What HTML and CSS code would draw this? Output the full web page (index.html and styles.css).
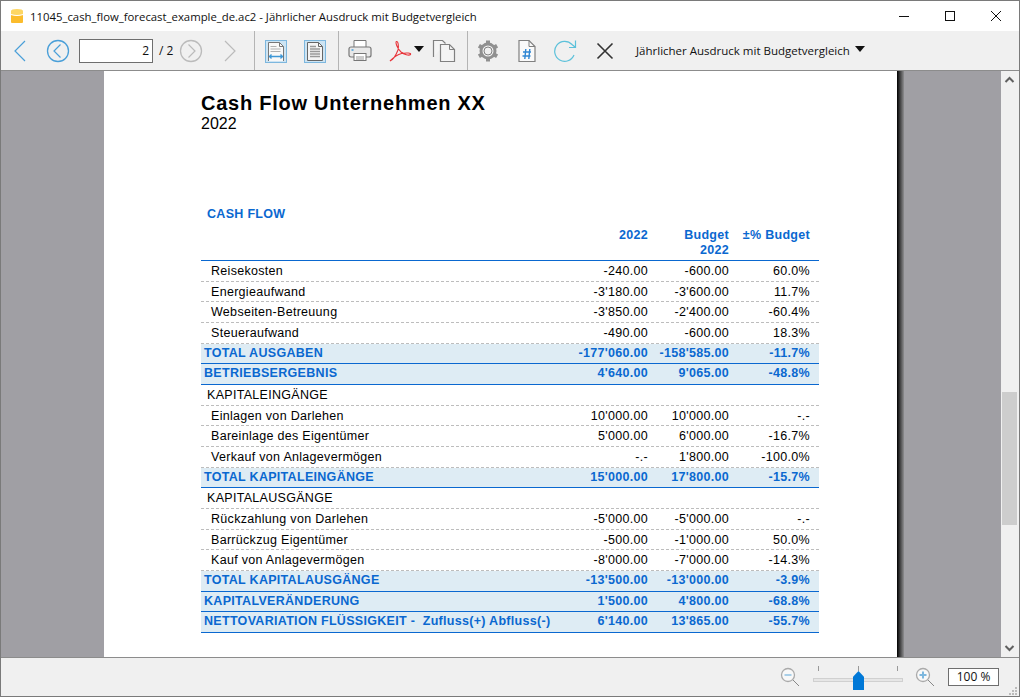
FILE: index.html
```html
<!DOCTYPE html>
<html>

<head>
    <title>11045_cash_flow_forecast_example_de.ac2</title>
    <link rel="stylesheet" href="styles.css">
</head>

<body>
    <div class="window">
        <div class="titlebar">
            <svg class="appicon" width="14" height="16" viewBox="0 0 14 16">
                <path d="M1 4h12v10q0 1-1 1H2q-1 0-1-1z" fill="#fbbc2c" />
                <path d="M1 3q0-2 6-2t6 2v3q-3 1.500-6 1.500T1 6z" fill="#fdd663" />
                <path d="M1 6.500q6 2 12 0" fill="none" stroke="#fff" stroke-width="1.200" />
            </svg>
            <span class="titletext">11045_cash_flow_forecast_example_de.ac2 - Jährlicher Ausdruck mit Budgetvergleich</span>
            <div class="winbtns">
                <svg width="46" height="16" viewBox="0 0 46 16"><path d="M18 8.500h10" stroke="#111" /></svg>
                <svg width="46" height="16" viewBox="0 0 46 16"><rect x="18.500" y="3.500" width="9" height="9" fill="none" stroke="#111" /></svg>
                <svg width="46" height="16" viewBox="0 0 46 16"><path d="M18 3l10 10M28 3L18 13" stroke="#111" fill="none" /></svg>
            </div>
        </div>

        <div class="toolbar">
            <svg class="t-back" width="16" height="24" viewBox="0 0 16 24"><path d="M13 2L3 12l10 10" fill="none" stroke="#4a9fd8" stroke-width="1.200" /></svg>
            <svg class="t-prev" width="24" height="24" viewBox="0 0 24 24"><circle cx="12" cy="12" r="10.500" fill="none" stroke="#4a9fd8" stroke-width="1.300" /><path d="M14.500 5.500L8 12l6.500 6.500" fill="none" stroke="#4a9fd8" stroke-width="1.200" /></svg>
            <div class="pagebox">2</div>
            <span class="pagetotal">/ 2</span>
            <svg class="t-next" width="24" height="24" viewBox="0 0 24 24"><circle cx="12" cy="12" r="10.500" fill="none" stroke="#bbb" stroke-width="1.300" /><path d="M9.500 5.500L16 12l-6.500 6.500" fill="none" stroke="#bbb" stroke-width="1.200" /></svg>
            <svg class="t-fwd" width="16" height="24" viewBox="0 0 16 24"><path d="M3 2l10 10L3 22" fill="none" stroke="#bbb" stroke-width="1.200" /></svg>
            <div class="sep s1"></div>
            <svg class="t-fit" width="24" height="24" viewBox="0 0 24 24">
                <rect x="1.500" y="1.500" width="21" height="22" fill="#cde4f3" stroke="#7db7de" />
                <path d="M4.500 22V3.500h11l4 4V22" fill="#f8f8f8" stroke="#777" />
                <path d="M15.500 3.500v4h4" fill="none" stroke="#777" />
                <path d="M6.500 7.500h6M6.500 10h10M6.500 12.500h10" stroke="#b0b0b0" />
                <path d="M5 17.500h14M7.500 15.500L5.500 17.500l2 2M16.500 15.500l2 2-2 2" fill="none" stroke="#3d97d6" stroke-width="1.300" />
            </svg>
            <svg class="t-page" width="24" height="24" viewBox="0 0 24 24">
                <rect x="1.500" y="1.500" width="21" height="22" fill="#cde4f3" stroke="#7db7de" />
                <path d="M4.500 21.500V3.500h11l4 4v14z" fill="#f4f4f4" stroke="#666" />
                <path d="M15.500 3.500v4h4" fill="none" stroke="#666" />
                <path d="M7 7.500h6M7 10h10M7 12.500h10M7 15h10M7 17.500h10" stroke="#999" stroke-width="1.500" />
            </svg>
            <div class="sep s2"></div>
            <svg class="t-print" width="24" height="24" viewBox="0 0 24 24">
                <path d="M6 8V1.500h12V8" fill="#fff" stroke="#777" />
                <rect x="1" y="8" width="22" height="10" rx="2" fill="#e8e8e8" stroke="#777" stroke-width="1.200" />
                <rect x="6" y="14.500" width="12" height="7" fill="#fff" stroke="#777" />
                <path d="M8 18h8M8 20h8" stroke="#999" />
                <path d="M3.500 11h2" stroke="#3d97d6" stroke-width="1.400" />
            </svg>
            <svg class="t-pdf" width="24" height="24" viewBox="0 0 24 24">
                <path d="M2 22c3-1 6-6 8-11 1-4 0-9-1.500-8.500C7 3 9 9 13 13c3 2.500 8 4 9.500 2.500 1-1.500-4-2-9-1-4 1-9 5-11.500 7.500z" fill="none" stroke="#e8343a" stroke-width="1.100" />
            </svg>
            <div class="caret t-caret"></div>
            <svg class="t-copy" width="24" height="24" viewBox="0 0 24 24">
                <path d="M1.500 18V1.500h9l3 3" fill="#f4f4f4" stroke="#808080" stroke-width="1.200" />
                <path d="M8.500 22.500v-17h9l5 5v12z" fill="#f4f4f4" stroke="#808080" stroke-width="1.200" />
                <path d="M17.500 5.500v5h5" fill="none" stroke="#808080" />
            </svg>
            <div class="sep s3"></div>
            <svg class="t-gear" width="24" height="24" viewBox="0 0 24 24">
                <circle cx="12" cy="12" r="7" fill="none" stroke="#909090" stroke-width="3" />
                <path d="M12 1.500v4M12 18.500v4M2.900 6.700l3.500 2M17.600 15.300l3.500 2M2.900 17.300l3.500-2M17.600 8.700l3.500-2" stroke="#909090" stroke-width="4" />
                <circle cx="12" cy="12" r="4" fill="#f0f0f0" stroke="#666" stroke-width="0.800" />
            </svg>
            <svg class="t-hash" width="24" height="24" viewBox="0 0 24 24">
                <path d="M4 22.500v-21h10l6 6v15z" fill="#fafafa" stroke="#808080" stroke-width="1.200" />
                <path d="M14 1.500v6h6" fill="none" stroke="#808080" />
                <path d="M8 13h8M7.500 17h8M10.800 10l-1 10M14.800 10l-1 10" stroke="#2f86d3" stroke-width="1.400" fill="none" />
            </svg>
            <svg class="t-refresh" width="24" height="24" viewBox="0 0 24 24">
                <path d="M20 16a10 10 0 1 1-2-10.500L21 8" fill="none" stroke="#5cc1da" stroke-width="1.200" />
                <path d="M21.500 1.500V8.500H15" fill="none" stroke="#5cc1da" stroke-width="1.200" />
            </svg>
            <svg class="t-close" width="24" height="24" viewBox="0 0 24 24"><path d="M4.500 4.500l15 15M19.500 4.500l-15 15" stroke="#333" stroke-width="1.600" /></svg>
            <span class="reportname">Jährlicher Ausdruck mit Budgetvergleich</span>
            <div class="caret t-caret2"></div>
        </div>

        <div class="viewer">
            <div class="paper">
                <h1 class="doctitle">Cash Flow Unternehmen XX</h1>
                <div class="docyear">2022</div>

                <div class="report">
                    <div class="reporttitle">CASH FLOW</div>
                    <div class="row head">
                        <div></div>
                        <div>2022</div>
                        <div>Budget<br>2022</div>
                        <div>±% Budget</div>
                    </div>

                    <div class="row item"><div>Reisekosten</div><div>-240.00</div><div>-600.00</div><div>60.0%</div></div>
                    <div class="row item"><div>Energieaufwand</div><div>-3'180.00</div><div>-3'600.00</div><div>11.7%</div></div>
                    <div class="row item"><div>Webseiten-Betreuung</div><div>-3'850.00</div><div>-2'400.00</div><div>-60.4%</div></div>
                    <div class="row item"><div>Steueraufwand</div><div>-490.00</div><div>-600.00</div><div>18.3%</div></div>
                    <div class="row total"><div>TOTAL AUSGABEN</div><div>-177'060.00</div><div>-158'585.00</div><div>-11.7%</div></div>
                    <div class="row total"><div>BETRIEBSERGEBNIS</div><div>4'640.00</div><div>9'065.00</div><div>-48.8%</div></div>
                    <div class="row group"><div>KAPITALEINGÄNGE</div><div></div><div></div><div></div></div>
                    <div class="row item"><div>Einlagen von Darlehen</div><div>10'000.00</div><div>10'000.00</div><div>-.-</div></div>
                    <div class="row item"><div>Bareinlage des Eigentümer</div><div>5'000.00</div><div>6'000.00</div><div>-16.7%</div></div>
                    <div class="row item"><div>Verkauf von Anlagevermögen</div><div>-.-</div><div>1'800.00</div><div>-100.0%</div></div>
                    <div class="row total"><div>TOTAL KAPITALEINGÄNGE</div><div>15'000.00</div><div>17'800.00</div><div>-15.7%</div></div>
                    <div class="row group"><div>KAPITALAUSGÄNGE</div><div></div><div></div><div></div></div>
                    <div class="row item"><div>Rückzahlung von Darlehen</div><div>-5'000.00</div><div>-5'000.00</div><div>-.-</div></div>
                    <div class="row item"><div>Barrückzug Eigentümer</div><div>-500.00</div><div>-1'000.00</div><div>50.0%</div></div>
                    <div class="row item"><div>Kauf von Anlagevermögen</div><div>-8'000.00</div><div>-7'000.00</div><div>-14.3%</div></div>
                    <div class="row total"><div>TOTAL KAPITALAUSGÄNGE</div><div>-13'500.00</div><div>-13'000.00</div><div>-3.9%</div></div>
                    <div class="row total"><div>KAPITALVERÄNDERUNG</div><div>1'500.00</div><div>4'800.00</div><div>-68.8%</div></div>
                    <div class="row total"><div>NETTOVARIATION FLÜSSIGKEIT - &nbsp;Zufluss(+) Abfluss(-)</div><div>6'140.00</div><div>13'865.00</div><div>-55.7%</div></div>
                </div>
            </div>
            <div class="papershadow"></div>
            <div class="backdrop"></div>
            <div class="scrollbar">
                <svg class="arrow" width="17" height="18" viewBox="0 0 17 18"><path d="M4.500 11l4-4 4 4" fill="none" stroke="#606060" stroke-width="2" /></svg>
                <div class="thumb"></div>
                <svg class="arrow arrow-down" width="17" height="18" viewBox="0 0 17 18"><path d="M4.500 7l4 4 4-4" fill="none" stroke="#606060" stroke-width="2" /></svg>
            </div>
        </div>

        <div class="statusbar">
            <svg class="zoomicon" width="22" height="22" viewBox="0 0 22 22">
                <circle cx="9" cy="9" r="6.500" fill="#f8f8f8" stroke="#aaa" stroke-width="1.300" />
                <path d="M5.500 9h7" stroke="#a9cfe8" stroke-width="2" />
                <path d="M14 14l6 6" stroke="#888" />
            </svg>
            <div class="slider">
                <i class="tick tick1"></i><i class="tick tick2"></i><i class="tick tick3"></i>
                <div class="track"></div>
                <div class="knob"></div>
            </div>
            <svg class="zoomicon zoomplus" width="22" height="22" viewBox="0 0 22 22">
                <circle cx="9" cy="9" r="6.500" fill="#f8f8f8" stroke="#aaa" stroke-width="1.300" />
                <path d="M5.500 9h7M9 5.500v7" stroke="#7db7de" stroke-width="2" />
                <path d="M14 14l6 6" stroke="#888" />
            </svg>
            <div class="zoombox">100 %</div>
            <svg class="grip" width="10" height="10" viewBox="0 0 10 10"><path d="M7 1h2v2H7zM4 4h2v2H4zM7 4h2v2H7zM1 7h2v2H1zM4 7h2v2H4zM7 7h2v2H7z" fill="#bbb" /></svg>
        </div>
    </div>
</body>

</html>
```

FILE: styles.css
```css
html, body {
    margin: 0;
    padding: 0;
}

body {
    width: 1020px;
    height: 698px;
    overflow: hidden;
    background-color: #fff;
}

.window {
    box-sizing: border-box;
    width: 1020px;
    height: 697px;
    border: 1px solid #7a7a7a;
    display: flex;
    flex-direction: column;
    font-family: "Open Sans", sans-serif;
}

.titlebar {
    height: 30px;
    background-color: #fff;
    display: flex;
    align-items: center;
    flex: none;
}

.appicon {
    margin-left: 9px;
}

.titletext {
    margin-left: 6px;
    font-family: "Open Sans", sans-serif;
    font-size: 11.35px;
    color: #111;
    white-space: nowrap;
}

.winbtns {
    margin-left: auto;
    display: flex;
    margin-right: 0;
}

.toolbar {
    height: 40px;
    flex: none;
    box-sizing: border-box;
    background-color: #f0f0f0;
    border-bottom: 1px solid #8c8c8c;
    display: flex;
    align-items: center;
    font-size: 11.5px;
    color: #111;
}

.toolbar svg {
    flex: none;
}

.t-back { margin-left: 11px; }
.t-prev { margin-left: 18px; }
.t-next { margin-left: 4px; }
.t-fwd { margin-left: 19px; }
.t-fit { margin-left: 9px; }
.t-page { margin-left: 15px; }
.t-print { margin-left: 9px; }
.t-pdf { margin-left: 16px; }
.t-caret { margin-left: 2px; }
.t-copy { margin-left: 8px; }
.t-gear { margin-left: 8px; }
.t-hash { margin-left: 15px; }
.t-refresh { margin-left: 15px; }
.t-close { margin-left: 15px; }

.pagebox {
    box-sizing: border-box;
    width: 74px;
    height: 24px;
    margin-left: 9px;
    border: 1px solid #6e6e6e;
    background-color: #fff;
    text-align: right;
    padding-right: 3px;
    line-height: 22px;
    font-size: 12px;
}

.pagetotal {
    width: 16px;
    margin-left: 6px;
    font-size: 12px;
    white-space: nowrap;
}

.sep {
    width: 1px;
    height: 39px;
    background-color: #b4b4b4;
    flex: none;
}

.s1 { margin-left: 16px; }
.s2 { margin-left: 11px; }
.s3 { margin-left: 11px; }

.reportname {
    margin-left: 19px;
    white-space: nowrap;
}

.caret {
    width: 0;
    height: 0;
    border-left: 5px solid transparent;
    border-right: 5px solid transparent;
    border-top: 6px solid #111;
    flex: none;
}

.t-caret {
    margin-top: -3px;
}

.t-caret2 {
    margin-left: 5px;
    margin-top: -3px;
}

.viewer {
    flex: 1;
    min-height: 0;
    display: flex;
    background-color: #a09fa4;
    overflow: hidden;
}

.paper {
    box-sizing: border-box;
    width: 793px;
    margin-left: 103px;
    flex: none;
    background-color: #fff;
    padding: 21px 0 0 97px;
    font-family: "Liberation Sans", Arial, sans-serif;
    color: #000;
}

.papershadow {
    width: 7px;
    flex: none;
    background: linear-gradient(to right, #000, #8e8e90);
}

.backdrop {
    flex: 1;
}

.doctitle {
    margin: 0;
    font-size: 20px;
    line-height: 23px;
    font-weight: bold;
    letter-spacing: 0.75px;
}

.docyear {
    font-size: 16px;
    line-height: 18px;
}

.report {
    width: 618px;
    margin-top: 73px;
    font-size: 12.5px;
    letter-spacing: 0.3px;
}

.reporttitle {
    padding-left: 6px;
    font-weight: bold;
    color: #0a68d0;
    line-height: 16px;
}

.row {
    display: grid;
    grid-template-columns: 366px 81px 81px 81px;
    box-sizing: border-box;
    height: 20.67px;
    line-height: 21px;
    white-space: nowrap;
    padding-right: 9px;
}

.row > div {
    text-align: right;
}

.row > div:first-child {
    text-align: left;
}

.head {
    height: 33px;
    margin-top: 6px;
    line-height: 15px;
    font-weight: bold;
    color: #0a68d0;
    border-bottom: 1px solid #0a68d0;
}

.item {
    border-bottom: 1px dashed #bdbdbd;
}

.item > div:first-child {
    padding-left: 10px;
}

.group {
    border-bottom: 1px dashed #bdbdbd;
}

.group > div:first-child {
    padding-left: 6px;
}

.total {
    background-color: #deecf4;
    font-weight: bold;
    color: #0a68d0;
    border-bottom: 1px solid #0a68d0;
    line-height: 19px;
}

.total > div:first-child {
    padding-left: 3px;
}

.scrollbar {
    width: 18px;
    flex: none;
    background-color: #f0f0f0;
    display: flex;
    flex-direction: column;
}

.arrow {
    flex: none;
}

.arrow-down {
    margin-top: auto;
}

.thumb {
    width: 15px;
    height: 133px;
    margin-top: 303px;
    margin-left: 1px;
    background-color: #cdcdcd;
}

.statusbar {
    height: 39px;
    flex: none;
    box-sizing: border-box;
    border-top: 1px solid #8c8c8c;
    background-color: #f0f0f0;
    display: flex;
    align-items: center;
    font-size: 12px;
    color: #111;
}

.zoomicon {
    margin-left: 778px;
    flex: none;
}

.zoomplus {
    margin-left: 11px;
}

.slider {
    position: relative;
    width: 90px;
    height: 24px;
    margin-left: 12px;
    flex: none;
}

.track {
    position: absolute;
    left: 0;
    right: 0;
    top: 13px;
    height: 4px;
    box-sizing: border-box;
    border: 1px solid #d0d0d0;
    background-color: #e6e6e6;
}

.tick {
    position: absolute;
    top: 1px;
    width: 1px;
    height: 5px;
    background-color: #999;
}

.tick1 { left: 5px; }
.tick2 { left: 45px; }
.tick3 { left: 84px; }

.knob {
    position: absolute;
    left: 40px;
    top: 6px;
    width: 11px;
    height: 19px;
    background-color: #0078d7;
    clip-path: polygon(50% 0, 100% 30%, 100% 100%, 0 100%, 0 30%);
}

.zoombox {
    box-sizing: border-box;
    width: 51px;
    height: 18px;
    margin-left: 12px;
    border: 1px solid #6e6e6e;
    background-color: #fff;
    text-align: center;
    line-height: 16px;
}

.grip {
    margin-left: 9px;
    margin-top: 27px;
    flex: none;
}
```
